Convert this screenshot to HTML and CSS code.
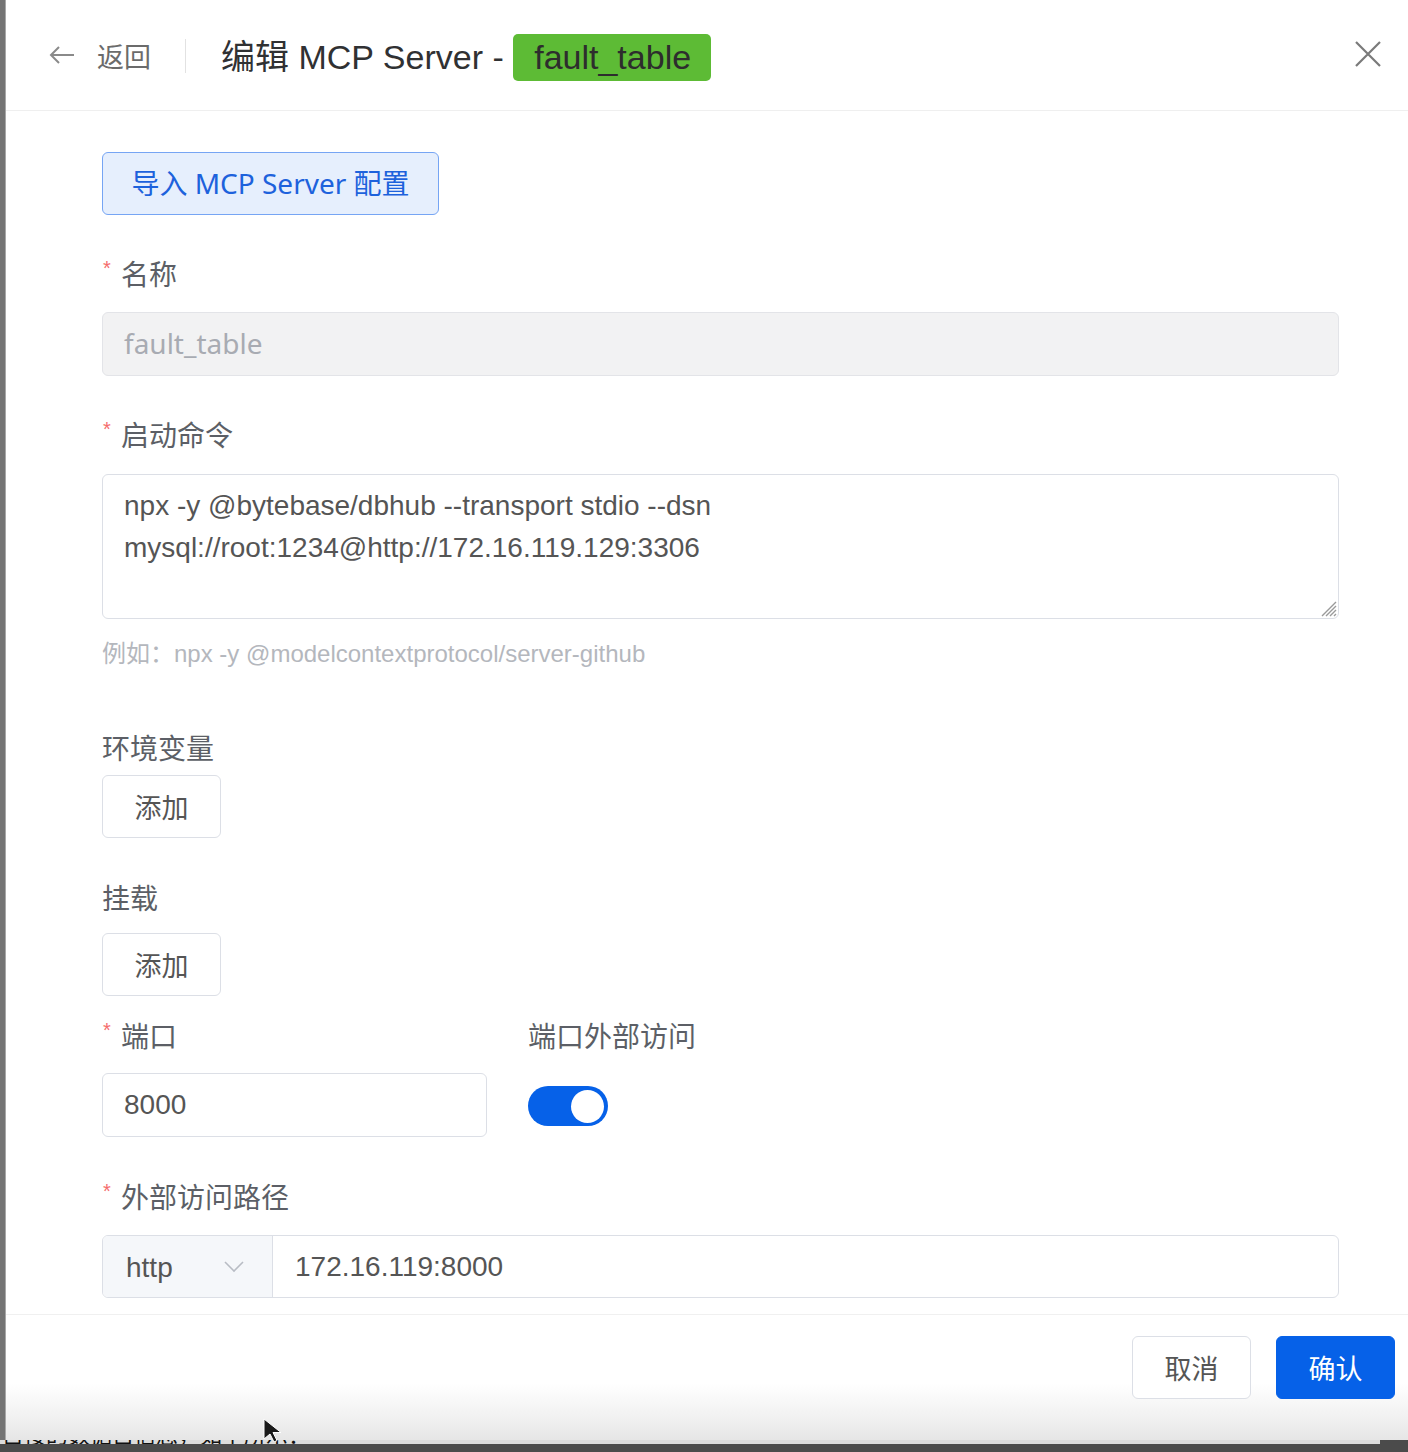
FILE: index.html
```html
<!DOCTYPE html>
<html lang="zh-CN">
<head>
<meta charset="utf-8">
<title>编辑 MCP Server</title>
<link rel="stylesheet" href="styles.css">
</head>
<body>
<div class="screen">
  <div class="edge"></div>
  <div class="drawer">
    <header class="head">
      <button class="back" type="button">
        <svg class="back-icon" viewBox="0 0 26 20" width="26" height="20"><path d="M25 10H2M10 2L2 10l8 8" fill="none" stroke="#8a8a8a" stroke-width="2"/></svg>
        <span>返回</span>
      </button>
      <span class="divider"></span>
      <h1 class="title">编辑 MCP Server - <span class="tag">fault_table</span></h1>
      <button class="close" type="button" aria-label="关闭">
        <svg viewBox="0 0 26 26" width="26" height="26"><path d="M1 1l24 24M25 1L1 25" fill="none" stroke="#7a7a7a" stroke-width="2.2"/></svg>
      </button>
    </header>

    <main class="body">
      <button class="import" type="button">导入 MCP Server 配置</button>

      <div class="field first">
        <div class="label"><span class="req">*</span>名称</div>
        <div class="input disabled name-input">fault_table</div>
      </div>

      <div class="field">
        <div class="label"><span class="req">*</span>启动命令</div>
        <div class="textarea">
          <div class="line">npx -y @bytebase/dbhub --transport stdio --dsn</div>
          <div class="line">mysql://root:1234@http://172.16.119.129:3306</div>
          <svg class="resize" viewBox="0 0 20 20" width="20" height="20"><path d="M19 5L5 19M19 9L9 19M19 13L13 19M19 17L17 19" stroke="#9a9a9a" stroke-width="1.4"/></svg>
        </div>
        <div class="hint">例如：npx -y @modelcontextprotocol/server-github</div>
      </div>

      <div class="field env">
        <div class="label tight">环境变量</div>
        <button class="btn" type="button">添加</button>
      </div>

      <div class="field mount">
        <div class="label mid">挂载</div>
        <button class="btn" type="button">添加</button>
      </div>

      <div class="row">
        <div class="field port">
          <div class="label"><span class="req">*</span>端口</div>
          <div class="input">8000</div>
        </div>
        <div class="field expose">
          <div class="label">端口外部访问</div>
          <div class="switch-wrap"><span class="switch on"><span class="knob"></span></span></div>
        </div>
      </div>

      <div class="field">
        <div class="label"><span class="req">*</span>外部访问路径</div>
        <div class="group">
          <div class="select">
            <span>http</span>
            <svg viewBox="0 0 20 12" width="20" height="12"><path d="M1 1l9 9 9-9" fill="none" stroke="#b8bcc4" stroke-width="1.6"/></svg>
          </div>
          <div class="group-input">172.16.119:8000</div>
        </div>
      </div>
    </main>

    <footer class="foot">
      <button class="btn" type="button">取消</button>
      <button class="btn primary" type="button">确认</button>
    </footer>
  </div>
</div>
<div class="under">
  <div class="under-text">目接的数据自信息，如下所示：</div>
</div>
<svg class="cursor" viewBox="0 0 24 24" width="24" height="24"><path d="M2 1v20l6-5 4 8 3-1.5-4-8h8z" fill="#1a1a1a" stroke="#fff" stroke-width="1"/></svg>
</body>
</html>
```

FILE: styles.css
```css
* { box-sizing: border-box; }

html, body {
  margin: 0;
  padding: 0;
}

body {
  width: 1408px;
  height: 1452px;
  overflow: hidden;
  background: #4b4b4b;
  font-family: "Liberation Sans", "Noto Sans CJK SC", sans-serif;
  color: #303133;
  position: relative;
}

.screen {
  display: flex;
  height: 1440px;
}

.edge {
  width: 6px;
  background: #747474;
  border-right: 1px solid #a8a8a8;
}

.drawer {
  flex: 1;
  display: flex;
  flex-direction: column;
  background: #fff;
}

/* header */
.head {
  height: 111px;
  flex: none;
  display: flex;
  align-items: center;
  padding: 0 26px 0 43px;
  border-bottom: 1px solid #efefef;
}

.back {
  display: flex;
  align-items: center;
  gap: 22px;
  border: 0;
  background: none;
  padding: 0;
  font-family: "Noto Sans CJK SC", sans-serif;
  font-size: 27px;
  color: #6b6b6b;
  cursor: pointer;
}

.back-icon { margin-top: 0; }

.divider {
  width: 1px;
  height: 34px;
  background: #e2e2e2;
  margin: 2px 35px 0 34px;
}

.title {
  margin: 0;
  flex: 1;
  display: flex;
  align-items: center;
  font-weight: 400;
  font-size: 34px;
  color: #303133;
  white-space: pre;
  margin-top: -2px;
}

.tag {
  margin-top: 7px;
  display: inline-flex;
  align-items: center;
  height: 47px;
  padding: 0 20px 0 21px;
  background: #5dbb35;
  border-radius: 5px;
  color: #2d2d2d;
  font-size: 34px;
  line-height: 47px;
}

.close {
  border: 0;
  background: none;
  padding: 0;
  width: 26px;
  height: 26px;
  margin-top: -2px;
  margin-right: 1px;
  cursor: pointer;
}

/* body */
.body {
  flex: 1;
  overflow: hidden;
  padding: 41px 69px 0 96px;
  display: flex;
  flex-direction: column;
  align-items: stretch;
}

.import {
  align-self: flex-start;
  width: 337px;
  height: 63px;
  border: 1.5px solid #76a5f4;
  background: #e6effd;
  border-radius: 6px;
  color: #1d62dc;
  font-family: "Noto Sans", "Noto Sans CJK SC", sans-serif;
  font-size: 28px;
  padding: 0 0 4px;
  cursor: pointer;
}

.field {
  display: flex;
  flex-direction: column;
  margin-top: 38px;
}

.label {
  height: 40px;
  line-height: 40px;
  margin-bottom: 19px;
  font-family: "Noto Sans CJK SC", sans-serif;
  font-size: 28px;
  color: #5c5f66;
  display: flex;
  align-items: center;
}

.label.tight { margin-bottom: 8px; }
.label.mid { margin-bottom: 16px; }

.req {
  color: #f56c6c;
  font-family: "Liberation Sans", sans-serif;
  font-size: 20px;
  width: 19px;
  align-self: flex-start;
  line-height: 30px;
  padding-left: 1px;
}

.input {
  height: 64px;
  border: 1.5px solid #dcdfe6;
  border-radius: 6px;
  padding: 0 21px;
  display: flex;
  align-items: center;
  font-size: 28px;
  color: #555;
}

.input.disabled {
  background: #f2f2f3;
  border-color: #e3e4e8;
  color: #a8abb2;
}

.name-input {
  font-family: "Noto Sans", sans-serif;
  font-size: 28px;
  padding-bottom: 3px;
}

.textarea {
  position: relative;
  height: 145px;
  margin-top: 1px;
  border: 1.5px solid #dcdfe6;
  border-radius: 6px;
  padding: 10px 21px;
  font-size: 28px;
  line-height: 42px;
  color: #555;
}

.resize {
  position: absolute;
  right: 1px;
  bottom: 1px;
}

.hint {
  margin-top: 19px;
  height: 32px;
  line-height: 32px;
  font-size: 24px;
  color: #b4b7bd;
  font-family: "Liberation Sans", "Noto Sans CJK SC", sans-serif;
}

.field.env { margin-top: 57px; }
.field.mount { margin-top: 39px; }

.btn {
  width: 119px;
  height: 63px;
  border: 1.5px solid #dcdfe6;
  border-radius: 6px;
  background: #fff;
  font-family: "Noto Sans CJK SC", sans-serif;
  font-size: 27px;
  color: #555;
  padding: 0;
  cursor: pointer;
}

.field .btn { align-self: flex-start; }

.row {
  display: flex;
  gap: 41px;
  margin-top: 19px;
}

.row .field { margin-top: 0; }

.port { width: 385px; }

.port .label { margin-bottom: 18px; }

.switch-wrap {
  height: 64px;
  display: flex;
  align-items: center;
}

.switch {
  width: 80px;
  height: 40px;
  border-radius: 20px;
  background: #0661e8;
  display: flex;
  align-items: center;
  justify-content: flex-end;
  padding: 0 4px;
}

.knob {
  width: 33px;
  height: 33px;
  border-radius: 50%;
  background: #fff;
}

.row + .field { margin-top: 38px; }

.group {
  height: 63px;
  display: flex;
  border: 1.5px solid #dcdfe6;
  border-radius: 6px;
  overflow: hidden;
}

.select {
  width: 170px;
  flex: none;
  background: #f5f7fa;
  border-right: 1.5px solid #dcdfe6;
  display: flex;
  align-items: center;
  justify-content: space-between;
  padding: 0 28px 0 23px;
  font-size: 28px;
  color: #555;
}

.select span { margin-top: 2px; }

.group-input {
  flex: 1;
  display: flex;
  align-items: center;
  padding: 0 22px;
  font-size: 28px;
  color: #555;
}

/* footer */
.foot {
  height: 126px;
  flex: none;
  border-top: 1.5px solid #f0f0f0;
  display: flex;
  justify-content: flex-end;
  align-items: flex-start;
  gap: 25px;
  padding: 21px 13px 0 0;
  background: linear-gradient(to bottom, #fff 0, #fff 55%, #f2f2f2 80%, #e6e6e6 100%);
}

.btn.primary {
  background: #0661e8;
  border-color: #0661e8;
  color: #fff;
}

/* underlying page */
.under {
  height: 12px;
  background: #4b4b4b;
  overflow: hidden;
}

.under-text {
  height: 4px;
  overflow: hidden;
  background: #dcdcdc;
  font-family: "Noto Sans CJK SC", sans-serif;
  font-size: 22px;
  line-height: 22px;
  color: #111;
  padding-left: 2px;
  width: 1380px;
  display: flex;
  align-items: flex-end;
}

.cursor {
  position: absolute;
  left: 262px;
  top: 1418px;
}
```
